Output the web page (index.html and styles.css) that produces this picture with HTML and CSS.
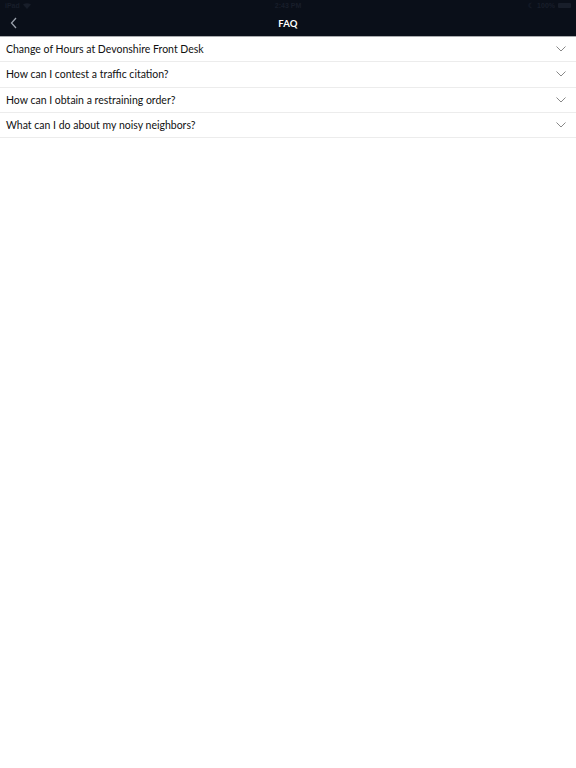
FILE: index.html
```html
<!DOCTYPE html>
<html>
<head>
<meta charset="utf-8">
<link rel="stylesheet" href="styles.css">
</head>
<body>
<header class="topbar">
  <div class="status">
    <div class="status-left">iPad <svg class="wifi" width="8" height="6" viewBox="0 0 8 6"><path d="M0 1.6 Q4 -1.2 8 1.6 L4 6 Z" fill="#181e2a"/></svg></div>
    <div class="status-center">2:43 PM</div>
    <div class="status-right"><span class="moon">☾</span> 100% <span class="battery"></span></div>
  </div>
  <div class="navbar">
    <svg class="back" width="8" height="12" viewBox="0 0 8 12"><path d="M6 1 L1.5 6 L6 11" fill="none" stroke="#9aa0ab" stroke-width="1.3"/></svg>
    <div class="title">FAQ</div>
  </div>
</header>
<ul class="faq">
  <li class="row"><span>Change of Hours at Devonshire Front Desk</span><svg class="chev" width="10" height="6" viewBox="0 0 10 6"><path d="M0.5 0.5 L5 5 L9.5 0.5" fill="none" stroke="#888" stroke-width="1"/></svg></li>
  <li class="row"><span>How can I contest a traffic citation?</span><svg class="chev" width="10" height="6" viewBox="0 0 10 6"><path d="M0.5 0.5 L5 5 L9.5 0.5" fill="none" stroke="#888" stroke-width="1"/></svg></li>
  <li class="row"><span>How can I obtain a restraining order?</span><svg class="chev" width="10" height="6" viewBox="0 0 10 6"><path d="M0.5 0.5 L5 5 L9.5 0.5" fill="none" stroke="#888" stroke-width="1"/></svg></li>
  <li class="row"><span>What can I do about my noisy neighbors?</span><svg class="chev" width="10" height="6" viewBox="0 0 10 6"><path d="M0.5 0.5 L5 5 L9.5 0.5" fill="none" stroke="#888" stroke-width="1"/></svg></li>
</ul>
</body>
</html>
```
FILE: styles.css
```css
* { box-sizing: border-box; }
body {
  margin: 0;
  background: #fff;
  font-family: Lato, "Noto Sans", sans-serif;
}
.topbar {
  background: #0a0f19;
  height: 37px;
  border-bottom: 1px solid #a9abae;
}
.status {
  height: 11px;
  display: flex;
  justify-content: space-between;
  align-items: center;
  padding: 0 5px;
  font-size: 7px;
  color: #181e2a;
  font-weight: 700;
  font-family: "Liberation Sans", sans-serif;
}
.status-left, .status-right { flex: 1; display: flex; align-items: center; gap: 3px; }
.status-right { justify-content: flex-end; }
.status-center { flex: 0 0 auto; }
.battery {
  display: inline-block;
  width: 13px;
  height: 5px;
  background: #181e2a;
  border-radius: 1px;
}
.navbar {
  height: 25px;
  display: flex;
  align-items: center;
  justify-content: center;
  position: relative;
}
.back {
  position: absolute;
  left: 10px;
  top: 6px;
}
.title {
  color: #fff;
  font-weight: 700;
  font-size: 9.5px;
  letter-spacing: 0.2px;
}
.faq {
  list-style: none;
  margin: 0;
  padding: 0;
}
.row {
  height: 25.3px;
  display: flex;
  align-items: center;
  justify-content: space-between;
  padding: 0 10px 0 6px;
  border-bottom: 1px solid #ececec;
  font-size: 10.5px;
  color: #111;
}
.chev { flex: 0 0 auto; }
```
